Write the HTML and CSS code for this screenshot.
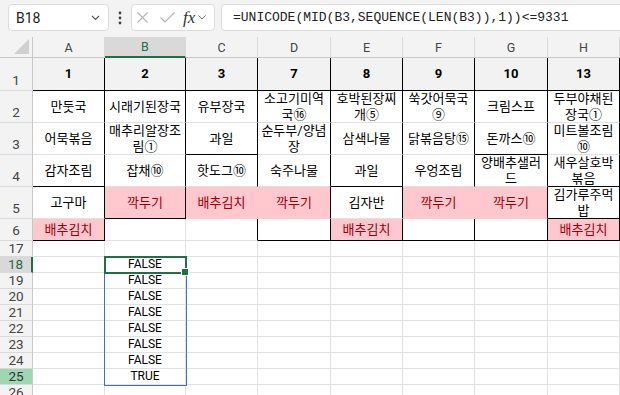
FILE: index.html
```html
<!DOCTYPE html>
<html lang="ko">
<head>
    <meta charset="UTF-8">
    <title>급식 메뉴 - Excel</title>
    <link rel="stylesheet" href="styles.css">
</head>
<body>
    <div class="bar">
        <div class="namebox">
            <span>B18</span>
            <svg width="9" height="6" viewBox="0 0 9 6"><path d="M1 1l3.5 3.5L8 1" fill="none" stroke="#555" stroke-width="1.2"/></svg>
        </div>
        <div class="dots">
            <svg width="4" height="14" viewBox="0 0 4 14"><circle cx="2" cy="2" r="1.4" fill="#444"/><circle cx="2" cy="7" r="1.4" fill="#444"/><circle cx="2" cy="12" r="1.4" fill="#444"/></svg>
        </div>
        <div class="fxbox">
            <svg class="ic-x" width="11" height="11" viewBox="0 0 11 11"><path d="M0.5 0.5l10 10M10.5 0.5l-10 10" stroke="#b3b3b3" stroke-width="1.1"/></svg>
            <svg class="ic-ok" width="15" height="11" viewBox="0 0 15 11"><path d="M0.5 5.5l4.5 4.5L14.5 0.5" fill="none" stroke="#b3b3b3" stroke-width="1.1"/></svg>
            <span class="fx">fx</span>
            <svg class="ic-dd" width="8" height="5" viewBox="0 0 8 5"><path d="M0.5 0.5l3.5 3.5L7.5 0.5" fill="none" stroke="#777" stroke-width="1"/></svg>
        </div>
        <div class="formula">=UNICODE(MID(B3,SEQUENCE(LEN(B3)),1))&lt;=9331</div>
    </div>

    <div class="sheet">
        <!-- column headers -->
        <div class="corner"><svg width="15" height="15" viewBox="0 0 15 15"><path d="M15 0V15H0Z" fill="#d0d0d0"/></svg></div>
        <div class="ch">A</div><div class="ch on">B</div><div class="ch">C</div><div class="ch">D</div>
        <div class="ch">E</div><div class="ch">F</div><div class="ch">G</div><div class="ch">H</div>

        <!-- row 1 -->
        <div class="rh">1</div>
        <div class="c h1 r b">1</div><div class="c h1 r b">2</div><div class="c h1 r b">3</div><div class="c h1 r b">7</div>
        <div class="c h1 r b">8</div><div class="c h1 r b">9</div><div class="c h1 r b">10</div><div class="c h1 r b">13</div>

        <!-- row 2 -->
        <div class="rh">2</div>
        <div class="c r">만둣국</div>
        <div class="c r">시래기된장국</div>
        <div class="c r">유부장국</div>
        <div class="c r">소고기미역<br>국⑯</div>
        <div class="c r">호박된장찌<br>개⑤</div>
        <div class="c r">쑥갓어묵국<br>⑨</div>
        <div class="c r">크림스프</div>
        <div class="c r">두부야채된<br>장국①</div>

        <!-- row 3 -->
        <div class="rh">3</div>
        <div class="c r">어묵볶음</div>
        <div class="c r">매추리알장조<br>림①</div>
        <div class="c r b">과일</div>
        <div class="c r">순두부/양념<br>장</div>
        <div class="c r">삼색나물</div>
        <div class="c r">닭볶음탕⑮</div>
        <div class="c r b">돈까스⑩</div>
        <div class="c r">미트볼조림<br>⑩</div>

        <!-- row 4 -->
        <div class="rh">4</div>
        <div class="c r b">감자조림</div>
        <div class="c r">잡채⑩</div>
        <div class="c r">핫도그⑩</div>
        <div class="c r">숙주나물</div>
        <div class="c r b">과일</div>
        <div class="c r">우엉조림</div>
        <div class="c r">양배추샐러<br>드</div>
        <div class="c r b">새우살호박<br>볶음</div>

        <!-- row 5 -->
        <div class="rh">5</div>
        <div class="c r">고구마</div>
        <div class="c pk r b">깍두기</div>
        <div class="c pk">배추김치</div>
        <div class="c pk r">깍두기</div>
        <div class="c r">김자반</div>
        <div class="c pk">깍두기</div>
        <div class="c pk r">깍두기</div>
        <div class="c r b">김가루주먹<br>밥</div>

        <!-- row 6 -->
        <div class="rh">6</div>
        <div class="c pk r b">배추김치</div>
        <div class="c"></div>
        <div class="c r"></div>
        <div class="c r b"></div>
        <div class="c pk r b">배추김치</div>
        <div class="c r b"></div>
        <div class="c r b"></div>
        <div class="c pk r b">배추김치</div>

        <!-- rows 17 - 26 -->
        <div class="rh s">17</div>
        <div class="c"></div><div class="c"></div><div class="c"></div><div class="c"></div>
        <div class="c"></div><div class="c"></div><div class="c"></div><div class="c"></div>

        <div class="rh s on">18</div>
        <div class="c"></div><div class="c v">FALSE</div><div class="c"></div><div class="c"></div>
        <div class="c"></div><div class="c"></div><div class="c"></div><div class="c"></div>

        <div class="rh s">19</div>
        <div class="c"></div><div class="c v">FALSE</div><div class="c"></div><div class="c"></div>
        <div class="c"></div><div class="c"></div><div class="c"></div><div class="c"></div>

        <div class="rh s">20</div>
        <div class="c"></div><div class="c v">FALSE</div><div class="c"></div><div class="c"></div>
        <div class="c"></div><div class="c"></div><div class="c"></div><div class="c"></div>

        <div class="rh s">21</div>
        <div class="c"></div><div class="c v">FALSE</div><div class="c"></div><div class="c"></div>
        <div class="c"></div><div class="c"></div><div class="c"></div><div class="c"></div>

        <div class="rh s">22</div>
        <div class="c"></div><div class="c v">FALSE</div><div class="c"></div><div class="c"></div>
        <div class="c"></div><div class="c"></div><div class="c"></div><div class="c"></div>

        <div class="rh s">23</div>
        <div class="c"></div><div class="c v">FALSE</div><div class="c"></div><div class="c"></div>
        <div class="c"></div><div class="c"></div><div class="c"></div><div class="c"></div>

        <div class="rh s">24</div>
        <div class="c"></div><div class="c v">FALSE</div><div class="c"></div><div class="c"></div>
        <div class="c"></div><div class="c"></div><div class="c"></div><div class="c"></div>

        <div class="rh s hl">25</div>
        <div class="c"></div><div class="c v">TRUE</div><div class="c"></div><div class="c"></div>
        <div class="c"></div><div class="c"></div><div class="c"></div><div class="c"></div>

        <div class="rh s">26</div>
        <div class="c"></div><div class="c"></div><div class="c"></div><div class="c"></div>
        <div class="c"></div><div class="c"></div><div class="c"></div><div class="c"></div>

        <!-- spill range and active cell -->
        <div class="spill"></div>
        <div class="active"><span class="handle"></span></div>
    </div>
</body>
</html>
```

FILE: styles.css
```css
body {
    margin: 0;
    width: 620px;
    height: 395px;
    overflow: hidden;
    background: #fff;
    font-family: Roboto, "Noto Sans CJK KR", sans-serif;
    color: #000;
}

/* formula bar */
.bar {
    height: 37px;
    box-sizing: border-box;
    background: #f3f3f3;
    display: flex;
    align-items: flex-start;
    padding: 4px 0 0 8px;
}
.namebox {
    width: 101px;
    height: 27px;
    box-sizing: border-box;
    background: #fff;
    border: 1px solid #dcdcdc;
    border-radius: 4px;
    display: flex;
    align-items: center;
    justify-content: space-between;
    padding: 0 8px 0 7px;
    font-size: 14px;
    color: #222;
}
.dots {
    width: 22px;
    height: 27px;
    display: flex;
    align-items: center;
    justify-content: center;
}
.fxbox {
    width: 84px;
    height: 27px;
    box-sizing: border-box;
    background: #fff;
    border: 1px solid #dcdcdc;
    border-radius: 4px;
    display: flex;
    align-items: center;
}
.ic-x { margin-left: 5px; }
.ic-ok { margin-left: 12px; }
.fx {
    margin-left: 8px;
    font-family: "Liberation Serif", serif;
    font-style: italic;
    font-size: 17px;
    color: #333;
    line-height: 1;
}
.ic-dd { margin-left: 3px; }
.formula {
    flex: 1;
    height: 27px;
    margin-left: 6px;
    box-sizing: border-box;
    background: #fff;
    border: 1px solid #dcdcdc;
    border-right: none;
    border-radius: 4px 0 0 4px;
    padding-left: 11px;
    display: flex;
    align-items: center;
    font-family: "Liberation Mono", monospace;
    font-size: 13px;
    color: #222;
    white-space: nowrap;
}

/* sheet grid */
.sheet {
    position: relative;
    display: grid;
    grid-template-columns: 33px 72px 81px 72px 73px 72px 72px 73px 72px;
    grid-template-rows: 21px 33px 32px 32px 32px 32px 22px repeat(10, 16px);
}
.corner {
    background: #f3f3f3;
    border-right: 1px solid #c8c8c8;
    border-bottom: 1px solid #c8c8c8;
    display: flex;
    align-items: flex-end;
    justify-content: flex-end;
    padding: 0 3px 3px 0;
}
.ch {
    background: #f3f3f3;
    border-right: 1px solid #dadada;
    border-bottom: 1px solid #c8c8c8;
    display: flex;
    align-items: center;
    justify-content: center;
    font-size: 12.5px;
    color: #444;
}
.ch.on {
    background: #d9d9d9;
    color: #1e6e42;
    border-bottom: 2px solid #1e7145;
}
.rh {
    background: #f3f3f3;
    border-right: 1px solid #c8c8c8;
    border-bottom: 1px solid #dadada;
    display: flex;
    align-items: flex-end;
    justify-content: center;
    padding-bottom: 2px;
    font-size: 13.5px;
    line-height: 16px;
    color: #444;
}
.rh.s { padding-bottom: 0; line-height: 15px; }
.rh.on {
    background: #d9d9d9;
    color: #1e6e42;
    border-right: 2px solid #1e7145;
}
.rh.hl { background: #9fd6b4; color: #333; }

.c {
    border-right: 1px solid #e1e1e1;
    border-bottom: 1px solid #e1e1e1;
    display: flex;
    align-items: center;
    justify-content: center;
    text-align: center;
    font-size: 13px;
    line-height: 16px;
    white-space: nowrap;
}
.h1 {
    background: #f2f2f2;
    font-weight: bold;
}
.pk {
    background: #ffc7ce;
    color: #9c0006;
    border-color: #ffc7ce;
}
.r { border-right-color: #000; }
.b { border-bottom-color: #000; }
.v { font-size: 12px; line-height: 15px; }

.spill {
    position: absolute;
    left: 104px;
    top: 235px;
    width: 83px;
    height: 114px;
    box-sizing: border-box;
    border: 1px solid #3f6fc6;
}
.active {
    position: absolute;
    left: 104px;
    top: 219px;
    width: 83px;
    height: 18px;
    box-sizing: border-box;
    border: 2px solid #1e7145;
}
.handle {
    position: absolute;
    right: -4px;
    bottom: -4px;
    width: 6px;
    height: 6px;
    background: #1e7145;
    border: 1px solid #fff;
}
```
